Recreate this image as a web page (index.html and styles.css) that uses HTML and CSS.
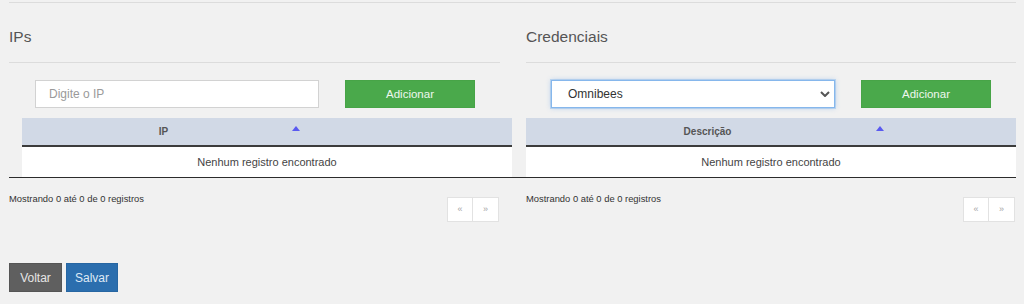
FILE: index.html
```html
<!DOCTYPE html>
<html lang="pt-BR">
<head>
  <meta charset="UTF-8">
  <meta name="viewport" content="width=device-width, initial-scale=1.0">
  <title>IPs e Credenciais</title>
  <link rel="stylesheet" href="styles.css">
</head>
<body>
  <div class="page">
    <div class="columns">

      <div class="panel">
        <h3 class="panel-title">IPs</h3>
        <div class="form-row">
          <input type="text" class="field" placeholder="Digite o IP">
          <button class="btn-add">Adicionar</button>
        </div>
        <div class="table-wrap wrap-left">
          <table class="grid grid-ip">
            <thead>
              <tr>
                <th class="sorting">IP</th>
                <th></th>
              </tr>
            </thead>
            <tbody>
              <tr><td colspan="2">Nenhum registro encontrado</td></tr>
            </tbody>
          </table>
        </div>
        <div class="table-footer">
          <div class="info">Mostrando 0 até 0 de 0 registros</div>
          <div class="pager">
            <a class="pager-cell">&laquo;</a>
            <a class="pager-cell">&raquo;</a>
          </div>
        </div>
      </div>

      <div class="panel panel-right">
        <h3 class="panel-title">Credenciais</h3>
        <div class="form-row">
          <div class="select-box">
            <select class="field field-select">
              <option>Omnibees</option>
            </select>
            <svg class="chevron" width="10" height="6" viewBox="0 0 10 6">
              <path d="M1 1 L5 5 L9 1" fill="none" stroke="#555" stroke-width="2"/>
            </svg>
          </div>
          <button class="btn-add">Adicionar</button>
        </div>
        <div class="table-wrap">
          <table class="grid grid-cred">
            <thead>
              <tr>
                <th class="sorting">Descrição</th>
                <th></th>
              </tr>
            </thead>
            <tbody>
              <tr><td colspan="2">Nenhum registro encontrado</td></tr>
            </tbody>
          </table>
        </div>
        <div class="table-footer">
          <div class="info">Mostrando 0 até 0 de 0 registros</div>
          <div class="pager">
            <a class="pager-cell">&laquo;</a>
            <a class="pager-cell">&raquo;</a>
          </div>
        </div>
      </div>

    </div>

    <div class="actions">
      <button class="btn btn-back">Voltar</button>
      <button class="btn btn-save">Salvar</button>
    </div>
  </div>
</body>
</html>
```

FILE: styles.css
```css
body {
  margin: 0;
  font-family: "Liberation Sans", Arial, sans-serif;
  background-color: #f1f1f1;
  color: #333;
}

.page {
  padding: 2px 8px 0 9px;
}

.columns {
  display: grid;
  grid-template-columns: 491px 490px;
  column-gap: 26px;
  border-top: 1px solid #dcdcdc;
}

.panel-title {
  margin: 25px 0 0;
  padding-bottom: 16px;
  border-bottom: 1px solid #dcdcdc;
  font-size: 15.5px;
  line-height: 18px;
  font-weight: normal;
  color: #555;
}

.form-row {
  display: flex;
  gap: 26px;
  margin-top: 17px;
  padding-left: 26px;
}

.panel-right .form-row {
  padding-left: 25px;
}

.field {
  box-sizing: border-box;
  width: 284px;
  height: 28px;
  padding: 0 13px;
  border: 1px solid #d2d2d2;
  background-color: #fff;
  font-family: "Liberation Sans", Arial, sans-serif;
  font-size: 12px;
  color: #333;
  outline: none;
}

.field::placeholder {
  color: #9a9a9a;
}

.select-box {
  position: relative;
  width: 284px;
  height: 28px;
}

.field-select {
  appearance: none;
  -webkit-appearance: none;
  padding-left: 16px;
  border-color: #86b7ec;
  box-shadow: 0 0 0 1px rgba(134, 183, 236, 0.45), 0 0 5px rgba(102, 160, 230, 0.45);
}

.chevron {
  position: absolute;
  right: 5px;
  top: 11px;
  pointer-events: none;
}

.btn-add {
  box-sizing: border-box;
  width: 130px;
  height: 28px;
  border: 1px solid #47a447;
  background-color: #4aa94b;
  color: #eef7ee;
  font-family: "Liberation Sans", Arial, sans-serif;
  font-size: 11.5px;
  cursor: pointer;
}

.table-wrap {
  margin-top: 10px;
  border-bottom: 1px solid #2b2b2b;
}

.wrap-left {
  margin-right: -26px;
}

.wrap-left .grid {
  margin-left: 13px;
}

.grid {
  width: 490px;
  border-collapse: collapse;
  table-layout: fixed;
}

.grid th {
  position: relative;
  height: 27px;
  padding: 0;
  background-color: #d1d9e6;
  border-bottom: 2px solid #3c3c3c;
  font-size: 10px;
  font-weight: bold;
  color: #555;
  text-align: center;
}

.grid-ip th.sorting {
  width: 283px;
}

.grid-cred th.sorting {
  width: 363px;
}

.grid th.sorting::after {
  content: "";
  position: absolute;
  right: 5px;
  top: 8px;
  border-left: 4px solid transparent;
  border-right: 4px solid transparent;
  border-bottom: 5px solid #5a5af0;
}

.grid td {
  height: 30px;
  padding: 0;
  background-color: #fff;
  font-size: 11px;
  color: #444;
  text-align: center;
}

.table-footer {
  display: flex;
  justify-content: space-between;
  align-items: flex-start;
  margin-top: 15px;
}

.info {
  font-size: 9.4px;
  line-height: 12px;
  color: #333;
}

.pager {
  display: flex;
  margin-top: 4px;
  margin-right: 1px;
}

.pager-cell {
  box-sizing: border-box;
  width: 26px;
  height: 25px;
  border: 1px solid #e2e2e2;
  background-color: #fff;
  color: #a5a5a5;
  font-size: 9px;
  line-height: 23px;
  text-align: center;
}

.pager-cell + .pager-cell {
  border-left: none;
}

.actions {
  display: flex;
  gap: 4px;
  margin-top: 41px;
}

.btn {
  box-sizing: border-box;
  height: 29px;
  min-width: 53px;
  padding: 0 8px;
  font-family: "Liberation Sans", Arial, sans-serif;
  font-size: 12px;
  cursor: pointer;
}

.btn-back {
  border: 1px solid #555;
  background-color: #5f5f5f;
  color: #e6e6e6;
}

.btn-save {
  min-width: 52px;
  border: 1px solid #2766a2;
  background-color: #2b6eae;
  color: #dfe9f5;
}
```
